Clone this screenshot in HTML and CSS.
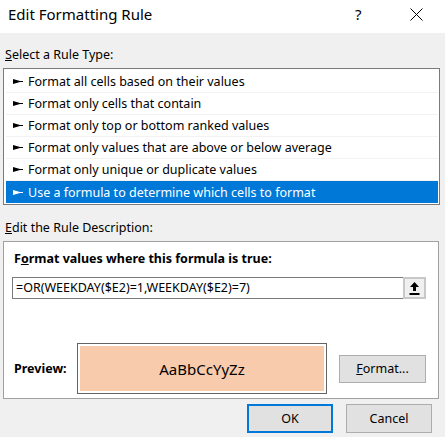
FILE: index.html
```html
<!DOCTYPE html>
<html lang="en">
<head>
    <meta charset="UTF-8">
    <title>Edit Formatting Rule</title>
    <link rel="stylesheet" href="styles.css">
</head>
<body>
    <div class="dialog">
        <div class="titlebar">
            <span class="title">Edit Formatting Rule</span>
            <span class="help">?</span>
            <span class="close">
                <svg width="13" height="13" viewBox="0 0 13 13"><path d="M0.5 0.5 L12.5 12.5 M12.5 0.5 L0.5 12.5" stroke="#000" stroke-width="1" fill="none"/></svg>
            </span>
        </div>

        <div class="section-label"><u>S</u>elect a Rule Type:</div>
        <div class="rule-list">
            <div class="rule-item"><svg class="arrow" width="10" height="5" viewBox="0 0 10 5"><path d="M0 0 L7 2 L10 2 L10 3 L7 3 L0 5 Z"/></svg>Format all cells based on their values</div>
            <div class="rule-item"><svg class="arrow" width="10" height="5" viewBox="0 0 10 5"><path d="M0 0 L7 2 L10 2 L10 3 L7 3 L0 5 Z"/></svg>Format only cells that contain</div>
            <div class="rule-item"><svg class="arrow" width="10" height="5" viewBox="0 0 10 5"><path d="M0 0 L7 2 L10 2 L10 3 L7 3 L0 5 Z"/></svg>Format only top or bottom ranked values</div>
            <div class="rule-item"><svg class="arrow" width="10" height="5" viewBox="0 0 10 5"><path d="M0 0 L7 2 L10 2 L10 3 L7 3 L0 5 Z"/></svg>Format only values that are above or below average</div>
            <div class="rule-item"><svg class="arrow" width="10" height="5" viewBox="0 0 10 5"><path d="M0 0 L7 2 L10 2 L10 3 L7 3 L0 5 Z"/></svg>Format only unique or duplicate values</div>
            <div class="rule-item selected"><svg class="arrow" width="10" height="5" viewBox="0 0 10 5"><path d="M0 0 L7 2 L10 2 L10 3 L7 3 L0 5 Z"/></svg>Use a formula to determine which cells to format</div>
        </div>

        <div class="section-label second"><u>E</u>dit the Rule Description:</div>
        <div class="desc-box">
            <div class="desc-title">F<u>o</u>rmat values where this formula is true:</div>
            <div class="formula-row">
                <div class="formula-input">=OR(WEEKDAY($E2)=1,WEEKDAY($E2)=7)</div>
                <div class="collapse-btn">
                    <svg width="11" height="13" viewBox="0 0 11 13"><path d="M5.5 0 L10 5 L7 5 L7 9 L4 9 L4 5 L1 5 Z" fill="#000"/><rect x="0.5" y="11" width="10" height="2" fill="#000"/></svg>
                </div>
            </div>
            <div class="preview-row">
                <span class="preview-label">Preview:</span>
                <div class="preview-box"><div class="preview-fill">AaBbCcYyZz</div></div>
                <div class="btn format-btn"><u>F</u>ormat...</div>
            </div>
        </div>

        <div class="footer">
            <div class="btn ok-btn">OK</div>
            <div class="btn">Cancel</div>
        </div>
    </div>
</body>
</html>
```

FILE: styles.css
```css
body {
    margin: 0;
    font-family: 'Segoe UI', 'Noto Sans', sans-serif;
    font-size: 12.5px;
    color: #000;
    background-color: #f0f0f0;
}
.dialog {
    width: 445px;
    height: 437px;
    background-color: #f0f0f0;
    overflow: hidden;
}
.titlebar {
    height: 33px;
    background-color: #fff;
    display: flex;
    align-items: center;
    padding-left: 8px;
}
.title {
    font-size: 15px;
    flex: 1;
    padding-bottom: 5px;
}
.help {
    font-size: 15px;
    width: 10px;
    margin-right: 45px;
    padding-bottom: 5px;
}
.close {
    display: flex;
    margin-right: 22px;
    padding-bottom: 5px;
}
.section-label {
    line-height: 16px;
    padding: 14px 0 0 5px;
    margin-bottom: 5px;
}
.section-label.second {
    padding-top: 15px;
}
.rule-list {
    margin-left: 3px;
    width: 432px;
    background-color: #fff;
    border: 1px solid #7a7a7a;
    padding: 2px 1px 1px 2px;
}
.rule-item {
    height: 22px;
    box-sizing: border-box;
    border-bottom: 1px solid #f2f2f2;
    display: flex;
    align-items: center;
    padding-left: 7px;
}
.rule-item .arrow {
    margin-right: 5px;
    fill: #000;
}
.rule-item.selected {
    background-color: #0078d7;
    color: #fff;
    border-bottom: none;
}
.rule-item.selected .arrow {
    fill: #fff;
}
.desc-box {
    margin-left: 3px;
    width: 426px;
    height: 147px;
    background-color: #fff;
    border: 1px solid #a0a0a0;
    padding: 9px 0 0 8px;
}
.desc-title {
    font-weight: bold;
    line-height: 16px;
    margin-left: 2px;
}
.formula-row {
    display: flex;
    margin-top: 10px;
}
.formula-input {
    width: 387px;
    height: 20px;
    border: 1px solid #7a7a7a;
    border-right: none;
    line-height: 20px;
    padding-left: 3px;
    font-size: 12.5px;
}
.collapse-btn {
    width: 19px;
    height: 18px;
    border: 2px solid #c8c8c8;
    background-color: #f0f0f0;
    display: flex;
    align-items: center;
    justify-content: center;
}
.preview-row {
    display: flex;
    align-items: center;
    margin-top: 44px;
}
.preview-label {
    font-weight: bold;
    width: 63px;
    margin-left: 2px;
}
.preview-box {
    width: 250px;
    height: 51px;
    border: 1px solid #646464;
    background-color: #fff;
    padding: 2px;
    box-sizing: border-box;
}
.preview-fill {
    height: 100%;
    background-color: #f8cbad;
    display: flex;
    align-items: center;
    justify-content: center;
    font-size: 15px;
}
.btn {
    width: 85px;
    height: 28px;
    box-sizing: border-box;
    border: 1px solid #adadad;
    background-color: #e1e1e1;
    display: flex;
    align-items: center;
    justify-content: center;
}
.format-btn {
    margin-left: 12px;
    width: 87px;
}
.footer {
    display: flex;
    justify-content: flex-end;
    gap: 13px;
    padding: 5px 13px 0 0;
}
.footer .btn {
    width: 86px;
    height: 29px;
}
.ok-btn {
    border: 2px solid #0078d7 !important;
}
```
